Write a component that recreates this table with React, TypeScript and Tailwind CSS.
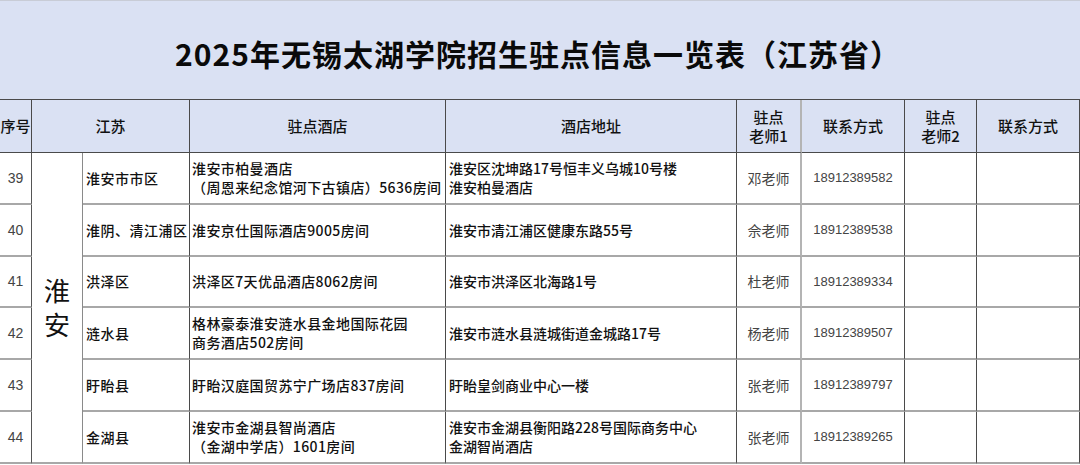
import React from "react";

const rows = [
  {
    no: "39",
    area: "淮安市市区",
    hotel: ["淮安市柏曼酒店", "（周恩来纪念馆河下古镇店）5636房间"],
    addr: ["淮安区沈坤路17号恒丰义乌城10号楼", "淮安柏曼酒店"],
    teacher: "邓老师",
    phone: "18912389582",
  },
  {
    no: "40",
    area: "淮阴、清江浦区",
    hotel: ["淮安京仕国际酒店9005房间"],
    addr: ["淮安市清江浦区健康东路55号"],
    teacher: "佘老师",
    phone: "18912389538",
  },
  {
    no: "41",
    area: "洪泽区",
    hotel: ["洪泽区7天优品酒店8062房间"],
    addr: ["淮安市洪泽区北海路1号"],
    teacher: "杜老师",
    phone: "18912389334",
  },
  {
    no: "42",
    area: "涟水县",
    hotel: ["格林豪泰淮安涟水县金地国际花园", "商务酒店502房间"],
    addr: ["淮安市涟水县涟城街道金城路17号"],
    teacher: "杨老师",
    phone: "18912389507",
  },
  {
    no: "43",
    area: "盱眙县",
    hotel: ["盱眙汉庭国贸苏宁广场店837房间"],
    addr: ["盱眙皇剑商业中心一楼"],
    teacher: "张老师",
    phone: "18912389797",
  },
  {
    no: "44",
    area: "金湖县",
    hotel: ["淮安市金湖县智尚酒店", "（金湖中学店）1601房间"],
    addr: ["淮安市金湖县衡阳路228号国际商务中心", "金湖智尚酒店"],
    teacher: "张老师",
    phone: "18912389265",
  },
];

const cjk = { fontFamily: '"Noto Sans CJK SC", "Noto Sans", sans-serif' };
const arial = { fontFamily: '"Liberation Sans", "Noto Sans CJK SC", sans-serif' };

export default function App() {
  return (
    <div className="w-[1080px] h-[465px] overflow-hidden bg-white" style={cjk}>
      <div className="h-[99px] bg-[#dae1f3] border-t border-[#c8ccd6] flex items-center justify-center pr-[4px] pt-[6px]">
        <div className="text-[30px] font-bold text-[#0a0a0a] tracking-[1px]">
          2025年无锡太湖学院招生驻点信息一览表（江苏省）
        </div>
      </div>
      <div className="grid grid-cols-[32px_51px_107px_256px_291px_65px_103px_72px_103px] grid-rows-[53px_52px_52px_51px_52px_52px_52px] border-t border-[#4a4a4a]">
        {/* header */}
        <div className="bg-[#dae1f3] border-r border-b border-[#4a4a4a] flex items-center justify-center text-[15px] text-[#111] font-medium">
          序号
        </div>
        <div className="col-span-2 bg-[#dae1f3] border-r border-b border-[#4a4a4a] flex items-center justify-center text-[15px] text-[#111] font-medium">
          江苏
        </div>
        <div className="bg-[#dae1f3] border-r border-b border-[#4a4a4a] flex items-center justify-center text-[15px] text-[#111] font-medium">
          驻点酒店
        </div>
        <div className="bg-[#dae1f3] border-r border-b border-[#4a4a4a] flex items-center justify-center text-[15px] text-[#111] font-medium">
          酒店地址
        </div>
        <div className="bg-[#dae1f3] border-r-2 border-r-[#b4b4b4] border-b border-b-[#4a4a4a] flex flex-col items-center justify-center text-[15px] leading-[19px] text-[#111] font-medium">
          <span>驻点</span>
          <span>老师1</span>
        </div>
        <div className="bg-[#dae1f3] border-r border-b border-[#4a4a4a] flex items-center justify-center text-[15px] text-[#111] font-medium">
          联系方式
        </div>
        <div className="bg-[#dae1f3] border-r border-b border-[#4a4a4a] flex flex-col items-center justify-center text-[15px] leading-[19px] text-[#111] font-medium">
          <span>驻点</span>
          <span>老师2</span>
        </div>
        <div className="bg-[#dae1f3] border-r border-b border-[#4a4a4a] flex items-center justify-center text-[15px] text-[#111] font-medium">
          联系方式
        </div>

        {rows.map((r, i) => (
          <React.Fragment key={r.no}>
            <div
              className="border-r border-r-[#555] border-b-2 border-b-[#a8a8a8] flex items-center justify-center text-[14px] text-[#444]"
              style={arial}
            >
              {r.no}
            </div>
            {i === 0 && (
              <div className="row-span-6 border-r border-r-[#8a8a8a] border-b-2 border-b-[#a8a8a8] flex flex-col items-center justify-center text-[26px] leading-[34px] text-[#111] pb-[2px]">
                <span>淮</span>
                <span>安</span>
              </div>
            )}
            <div className="border-r border-r-[#4a4a4a] border-b-2 border-b-[#a8a8a8] flex items-center pl-[3px] text-[14px] text-[#111] font-medium tracking-[0.5px] whitespace-nowrap">
              {r.area}
            </div>
            <div className="border-r border-r-[#4a4a4a] border-b-2 border-b-[#a8a8a8] flex flex-col justify-center pl-[2px] text-[14px] leading-[19px] text-[#111] font-medium tracking-[0.4px] whitespace-nowrap">
              {r.hotel.map((h) => (
                <span key={h}>{h}</span>
              ))}
            </div>
            <div className="border-r border-r-[#4a4a4a] border-b-2 border-b-[#a8a8a8] flex flex-col justify-center pl-[3px] text-[14px] leading-[19px] text-[#111] font-medium whitespace-nowrap">
              {r.addr.map((h) => (
                <span key={h}>{h}</span>
              ))}
            </div>
            <div className="border-r-2 border-r-[#b4b4b4] border-b-2 border-b-[#a8a8a8] flex items-center justify-center text-[14px] text-[#444]">
              {r.teacher}
            </div>
            <div
              className="border-r border-r-[#4a4a4a] border-b-2 border-b-[#a8a8a8] flex items-center justify-center text-[13px] text-[#444]"
              style={arial}
            >
              {r.phone}
            </div>
            <div className="border-r border-r-[#4a4a4a] border-b-2 border-b-[#a8a8a8]" />
            <div className="border-r border-r-[#4a4a4a] border-b-2 border-b-[#a8a8a8]" />
          </React.Fragment>
        ))}
      </div>
    </div>
  );
}
